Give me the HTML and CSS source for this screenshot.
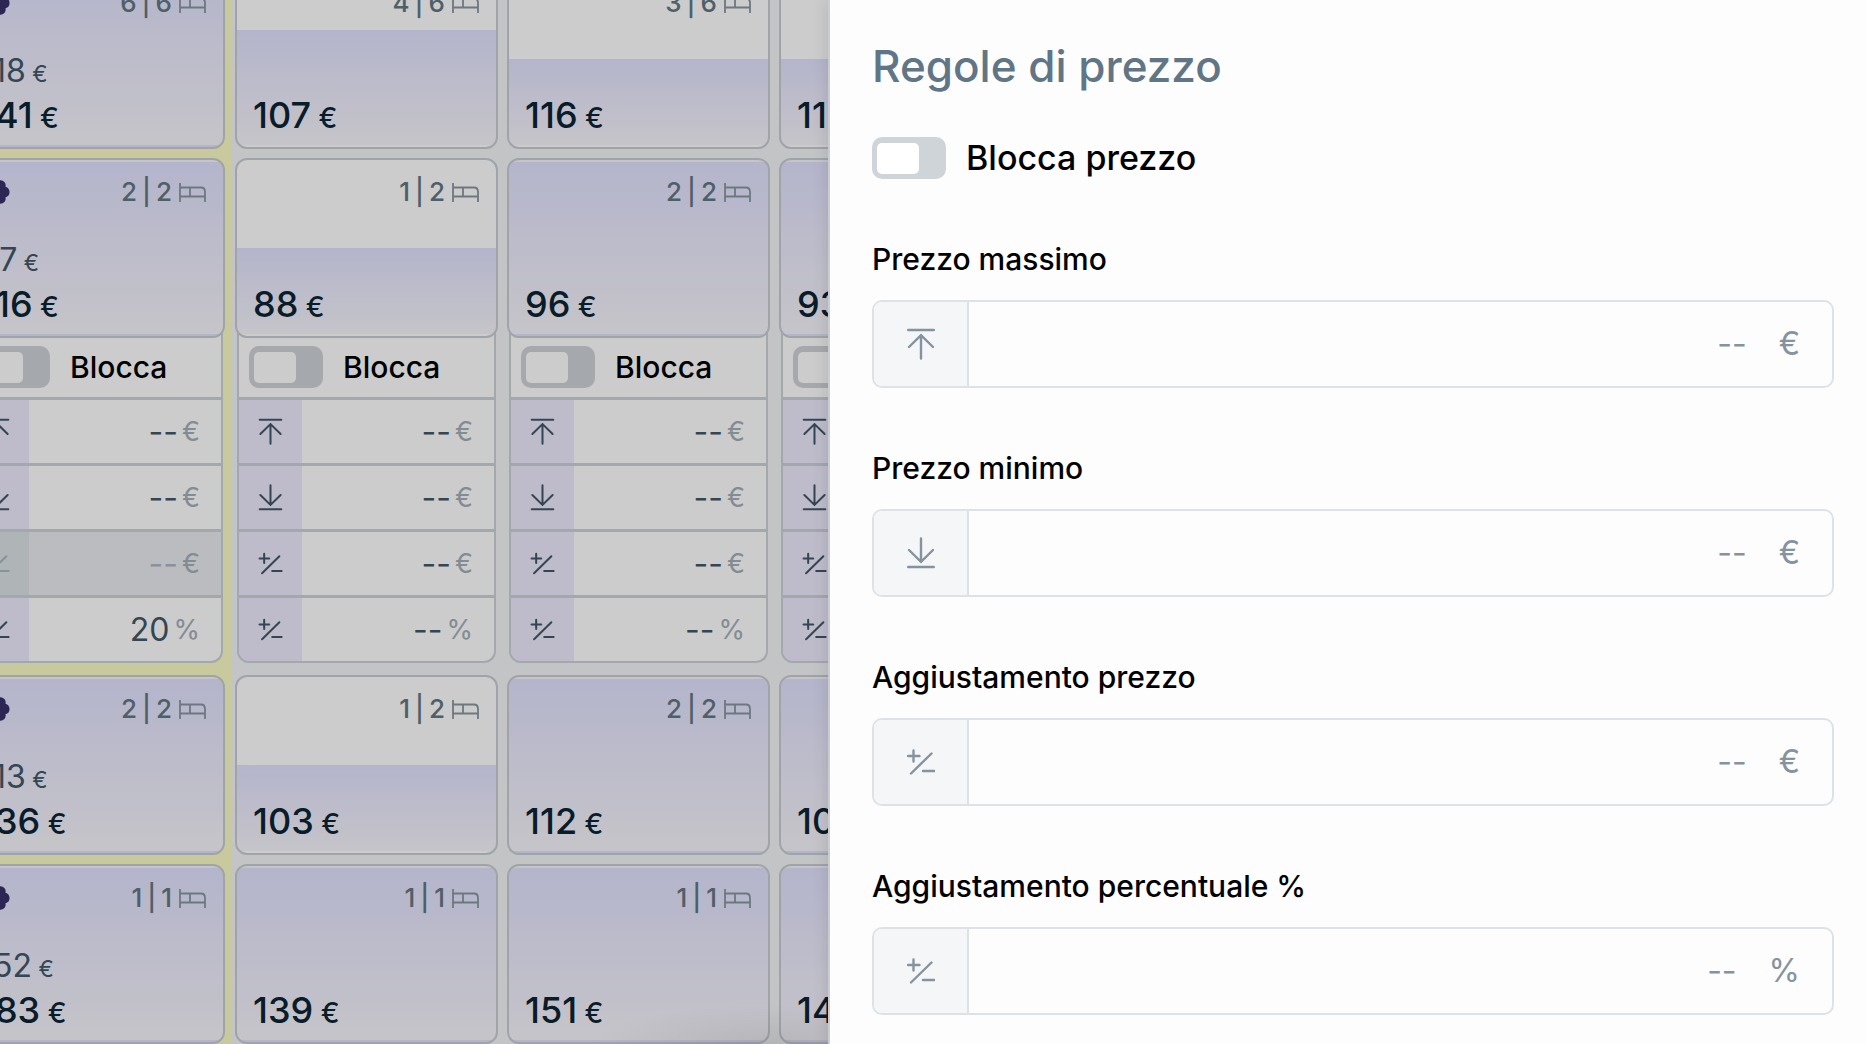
FILE: index.html
```html
<!DOCTYPE html>
<html lang="it">
<head>
    <meta charset="UTF-8">
    <meta name="viewport" content="width=device-width, initial-scale=1.0">
    <title>Regole di prezzo</title>
    <link rel="stylesheet" href="styles.css">
</head>
<body>

    <!-- Icons -->
    <svg class="sprite" width="0" height="0" aria-hidden="true">
        <symbol id="max" viewBox="0 0 28 32"><path d="M1.2 2H26.8M14 30.5V7.5M2 19L14 7.2L26 19"/></symbol>
        <symbol id="min" viewBox="0 0 28 32"><path d="M1.2 30H26.8M14 1.5V24.5M2 13L14 24.8L26 13"/></symbol>
        <symbol id="adjust" viewBox="0 0 28 32"><path d="M1 10H12.5M6.5 4.5V15.5M4 27.5L24.5 7.5M16 25H27.2"/></symbol>
        <symbol id="bed" viewBox="0 0 27 19"><path d="M1 0.5V18.5M1 4.5H22Q26 4.5 26 9V18.5M1 13.5H26M11 4.5V13.5"/></symbol>
        <symbol id="flower" viewBox="0 0 30 30"><path fill-rule="evenodd" d="M15 0a5.5 5.5 0 0 1 5 3.3 5.2 5.2 0 0 1 5.5 6.4 5.5 5.5 0 0 1 0 10.6 5.2 5.2 0 0 1-5.5 6.4 5.5 5.5 0 0 1-10 0 5.2 5.2 0 0 1-5.5-6.4 5.5 5.5 0 0 1 0-10.6A5.2 5.2 0 0 1 10 3.3 5.5 5.5 0 0 1 15 0ZM15 10a5 5 0 1 0 0 10 5 5 0 0 0 0-10Z"/></symbol>
    </svg>

    <div class="page">
        <main class="calendar">
            <div class="days">

                <section class="day selected">
                    <article class="card full">
                        <div class="card-top">
                            <svg class="flower"><use href="#flower"/></svg>
                            <div class="beds"><span>6</span><span>|</span><span>6</span><svg><use href="#bed"/></svg></div>
                        </div>
                        <p class="old-price">118<small> €</small></p>
                        <p class="price">141<small> €</small></p>
                    </article>
                    <article class="card full">
                        <div class="card-top">
                            <svg class="flower"><use href="#flower"/></svg>
                            <div class="beds"><span>2</span><span>|</span><span>2</span><svg><use href="#bed"/></svg></div>
                        </div>
                        <p class="old-price">97<small> €</small></p>
                        <p class="price">116<small> €</small></p>
                    </article>
                    <div class="rules">
                        <label class="lock"><input type="checkbox" class="toggle">Blocca</label>
                        <label class="rule"><svg><use href="#max"/></svg><input type="text" placeholder="--" aria-label="Prezzo massimo"><span>€</span></label>
                        <label class="rule"><svg><use href="#min"/></svg><input type="text" placeholder="--" aria-label="Prezzo minimo"><span>€</span></label>
                        <label class="rule disabled"><svg><use href="#adjust"/></svg><input type="text" placeholder="--" aria-label="Aggiustamento prezzo" disabled><span>€</span></label>
                        <label class="rule"><svg><use href="#adjust"/></svg><input type="text" value="20" placeholder="--" aria-label="Aggiustamento percentuale"><span>%</span></label>
                    </div>
                    <article class="card full">
                        <div class="card-top">
                            <svg class="flower"><use href="#flower"/></svg>
                            <div class="beds"><span>2</span><span>|</span><span>2</span><svg><use href="#bed"/></svg></div>
                        </div>
                        <p class="old-price">113<small> €</small></p>
                        <p class="price">136<small> €</small></p>
                    </article>
                    <article class="card full">
                        <div class="card-top">
                            <svg class="flower"><use href="#flower"/></svg>
                            <div class="beds"><span>1</span><span>|</span><span>1</span><svg><use href="#bed"/></svg></div>
                        </div>
                        <p class="old-price">152<small> €</small></p>
                        <p class="price">183<small> €</small></p>
                    </article>
                </section>

                <section class="day">
                    <article class="card two-thirds">
                        <div class="card-top">
                            <div class="beds"><span>4</span><span>|</span><span>6</span><svg><use href="#bed"/></svg></div>
                        </div>
                        <p class="price">107<small> €</small></p>
                    </article>
                    <article class="card half">
                        <div class="card-top">
                            <div class="beds"><span>1</span><span>|</span><span>2</span><svg><use href="#bed"/></svg></div>
                        </div>
                        <p class="price">88<small> €</small></p>
                    </article>
                    <div class="rules">
                        <label class="lock"><input type="checkbox" class="toggle">Blocca</label>
                        <label class="rule"><svg><use href="#max"/></svg><input type="text" placeholder="--" aria-label="Prezzo massimo"><span>€</span></label>
                        <label class="rule"><svg><use href="#min"/></svg><input type="text" placeholder="--" aria-label="Prezzo minimo"><span>€</span></label>
                        <label class="rule"><svg><use href="#adjust"/></svg><input type="text" placeholder="--" aria-label="Aggiustamento prezzo"><span>€</span></label>
                        <label class="rule"><svg><use href="#adjust"/></svg><input type="text" placeholder="--" aria-label="Aggiustamento percentuale"><span>%</span></label>
                    </div>
                    <article class="card half">
                        <div class="card-top">
                            <div class="beds"><span>1</span><span>|</span><span>2</span><svg><use href="#bed"/></svg></div>
                        </div>
                        <p class="price">103<small> €</small></p>
                    </article>
                    <article class="card full">
                        <div class="card-top">
                            <div class="beds"><span>1</span><span>|</span><span>1</span><svg><use href="#bed"/></svg></div>
                        </div>
                        <p class="price">139<small> €</small></p>
                    </article>
                </section>

                <section class="day">
                    <article class="card half">
                        <div class="card-top">
                            <div class="beds"><span>3</span><span>|</span><span>6</span><svg><use href="#bed"/></svg></div>
                        </div>
                        <p class="price">116<small> €</small></p>
                    </article>
                    <article class="card full">
                        <div class="card-top">
                            <div class="beds"><span>2</span><span>|</span><span>2</span><svg><use href="#bed"/></svg></div>
                        </div>
                        <p class="price">96<small> €</small></p>
                    </article>
                    <div class="rules">
                        <label class="lock"><input type="checkbox" class="toggle">Blocca</label>
                        <label class="rule"><svg><use href="#max"/></svg><input type="text" placeholder="--" aria-label="Prezzo massimo"><span>€</span></label>
                        <label class="rule"><svg><use href="#min"/></svg><input type="text" placeholder="--" aria-label="Prezzo minimo"><span>€</span></label>
                        <label class="rule"><svg><use href="#adjust"/></svg><input type="text" placeholder="--" aria-label="Aggiustamento prezzo"><span>€</span></label>
                        <label class="rule"><svg><use href="#adjust"/></svg><input type="text" placeholder="--" aria-label="Aggiustamento percentuale"><span>%</span></label>
                    </div>
                    <article class="card full">
                        <div class="card-top">
                            <div class="beds"><span>2</span><span>|</span><span>2</span><svg><use href="#bed"/></svg></div>
                        </div>
                        <p class="price">112<small> €</small></p>
                    </article>
                    <article class="card full">
                        <div class="card-top">
                            <div class="beds"><span>1</span><span>|</span><span>1</span><svg><use href="#bed"/></svg></div>
                        </div>
                        <p class="price">151<small> €</small></p>
                    </article>
                </section>

                <section class="day">
                    <article class="card half">
                        <p class="price">113</p>
                    </article>
                    <article class="card full">
                        <p class="price">93</p>
                    </article>
                    <div class="rules">
                        <label class="lock"><input type="checkbox" class="toggle" aria-label="Blocca"></label>
                        <label class="rule"><svg><use href="#max"/></svg><input type="text" aria-label="Prezzo massimo"></label>
                        <label class="rule"><svg><use href="#min"/></svg><input type="text" aria-label="Prezzo minimo"></label>
                        <label class="rule"><svg><use href="#adjust"/></svg><input type="text" aria-label="Aggiustamento prezzo"></label>
                        <label class="rule"><svg><use href="#adjust"/></svg><input type="text" aria-label="Aggiustamento percentuale"></label>
                    </div>
                    <article class="card full">
                        <p class="price">109</p>
                    </article>
                    <article class="card full">
                        <p class="price">147</p>
                    </article>
                </section>

            </div>
            <div class="overlay"></div>
        </main>

        <aside class="drawer">
            <h1>Regole di prezzo</h1>
            <label class="lock-price"><input type="checkbox" class="toggle">Blocca prezzo</label>

            <form>
                <label for="maxPrice">Prezzo massimo</label>
                <div class="field">
                    <div class="prefix"><svg><use href="#max"/></svg></div>
                    <input type="text" id="maxPrice" placeholder="--">
                    <span>€</span>
                </div>

                <label for="minPrice">Prezzo minimo</label>
                <div class="field">
                    <div class="prefix"><svg><use href="#min"/></svg></div>
                    <input type="text" id="minPrice" placeholder="--">
                    <span>€</span>
                </div>

                <label for="adjustPrice">Aggiustamento prezzo</label>
                <div class="field">
                    <div class="prefix"><svg><use href="#adjust"/></svg></div>
                    <input type="text" id="adjustPrice" placeholder="--">
                    <span>€</span>
                </div>

                <label for="adjustPercent">Aggiustamento percentuale %</label>
                <div class="field">
                    <div class="prefix"><svg><use href="#adjust"/></svg></div>
                    <input type="text" id="adjustPercent" placeholder="--">
                    <span>%</span>
                </div>
            </form>
        </aside>
    </div>

</body>
</html>
```
FILE: styles.css
```css
* {
    box-sizing: border-box;
}

body {
    margin: 0;
    font-family: Inter, "Liberation Sans", sans-serif;
    font-weight: 500;
    background-color: #fdfdfe;
}

h1, p {
    margin: 0;
}

input {
    font: inherit;
    color: inherit;
}

small {
    line-height: 1;
}

svg {
    flex: none;
    fill: none;
    stroke: currentColor;
    stroke-width: 2.4;
    stroke-linecap: round;
}

.sprite {
    position: absolute;
}

.page {
    display: grid;
    grid-template-columns: 138fr 173fr;
    height: 100vh;
    overflow: hidden;
}

/* Calendar */
.calendar {
    position: relative;
    overflow: hidden;
    background-color: #f4f6f8;
}

/* scrolled a little to the right and down */
.days {
    display: flex;
    margin: -31px 0 0 -42px;
}

.day {
    flex: none;
    width: 272px;
    padding: 0 5px 9px 4px;
    display: flex;
    flex-direction: column;
    gap: 9px;
}

.day.selected {
    width: 273px;
    padding-right: 6px;
    background-color: #fbfcc4;
}

.overlay {
    position: absolute;
    inset: 0;
    background: radial-gradient(ellipse 180px 40px at 770px 100%, rgba(0, 0, 0, 0.08), transparent) rgba(0, 0, 0, 0.2);
    z-index: 2;
}

.card {
    position: relative;
    z-index: 1;
    height: 180px;
    padding: 16px 17px 8px 16px;
    display: flex;
    flex-direction: column;
    border: 2px solid #c8ced2;
    border-radius: 12px;
    background: linear-gradient(#e2e2ff, #f7f6fc) #fff no-repeat left bottom 2px;
    background-origin: padding-box;
    background-clip: padding-box;
}

.card.full {
    background-size: 100% 172px;
    background-repeat: repeat-y;
}

.card.two-thirds {
    background-size: 100% 115px;
}

.card.half {
    background-size: 100% 86px;
}

.card-top {
    display: flex;
    align-items: center;
    height: 32px;
}

.flower {
    width: 30px;
    height: 30px;
    fill: #363069;
    stroke: none;
}

.beds {
    display: flex;
    align-items: center;
    gap: 5px;
    margin-left: auto;
    font-size: 26px;
    line-height: 32px;
    color: #637783;
}

.beds svg {
    width: 27px;
    height: 19px;
    margin-left: 2px;
    stroke-width: 1.8;
    color: #8797a1;
}

.old-price {
    margin-top: auto;
    font-size: 32px;
    font-weight: 400;
    line-height: 40px;
    color: #415868;
}

.old-price small {
    font-size: 23px;
}

.price {
    margin-top: auto;
    font-size: 36px;
    line-height: 48px;
    color: #0a2534;
}

.old-price + .price {
    margin-top: 0;
}

.price small {
    font-size: 28px;
}

/* Rules under a card */
.rules {
    margin: -15px 2px 3px;
    border: 2px solid #cdd1d6;
    border-top: none;
    border-radius: 0 0 12px 12px;
    background-color: #fff;
    overflow: hidden;
}

.lock {
    display: flex;
    align-items: center;
    gap: 20px;
    height: 65px;
    padding: 5px 0 0 10px;
    font-size: 30px;
    line-height: 40px;
    color: #000;
}

.toggle {
    appearance: none;
    flex: none;
    width: 74px;
    height: 42px;
    margin: 0;
    padding: 6px 5px;
    border-radius: 10px;
    background-color: #cfd4d9;
    cursor: pointer;
}

.toggle::before {
    content: "";
    display: block;
    width: 42px;
    height: 31px;
    border-radius: 5px;
    background-color: #fff;
}

.toggle:checked::before {
    margin-left: auto;
}

.rule {
    display: flex;
    align-items: center;
    height: 66px;
    padding-right: 21px;
    border-top: 3px solid #cdd1d6;
    font-weight: 400;
    color: #415868;
}

.rule svg {
    width: 63px;
    height: 63px;
    padding: 18px 19px;
    background-color: #eeebfe;
}

.rule input {
    flex: 1;
    min-width: 0;
    padding: 0;
    border: none;
    background: none;
    font-size: 32px;
    line-height: 40px;
    text-align: right;
}

.rule input::placeholder {
    color: #415868;
    opacity: 1;
}

.rule span {
    margin-left: 4px;
    font-size: 27px;
    line-height: 32px;
    color: #a4afb9;
}

.rule.disabled {
    background-color: #eaecef;
    color: #acb7bf;
}

.rule.disabled svg {
    background-color: #dbe1e5;
}

.rule.disabled input::placeholder {
    color: #acb7bf;
}

/* Drawer */
.drawer {
    z-index: 3;
    padding: 38px 32px 30px 42px;
    border-left: 2px solid #c9cdd3;
    background-color: #fdfdfe;
    box-shadow: 0 0 16px rgba(0, 0, 0, 0.12);
}

.drawer h1 {
    font-size: 44px;
    font-weight: 500;
    line-height: 56px;
    color: #607585;
}

.lock-price {
    display: flex;
    align-items: center;
    gap: 20px;
    height: 42px;
    margin-top: 43px;
    font-size: 34px;
    line-height: 48px;
    color: #000;
}

.drawer form label {
    display: block;
    margin: 60px 0 21px;
    font-size: 30px;
    line-height: 40px;
    color: #000;
}

.field {
    display: flex;
    align-items: center;
    height: 88px;
    padding-right: 32px;
    border: 2px solid #dee2e6;
    border-radius: 10px;
    color: #84939f;
    font-size: 32px;
    font-weight: 400;
    overflow: hidden;
}

.prefix {
    display: flex;
    align-items: center;
    justify-content: center;
    align-self: stretch;
    width: 95px;
    border-right: 2px solid #dee2e6;
    background-color: #f4f6f8;
}

.prefix svg {
    width: 28px;
    height: 32px;
}

.field input {
    flex: 1;
    min-width: 0;
    padding: 0;
    border: none;
    background: none;
    line-height: 40px;
    text-align: right;
}

.field input::placeholder {
    color: #84939f;
    opacity: 1;
}

.field span {
    margin-left: 32px;
    line-height: 40px;
}
```
